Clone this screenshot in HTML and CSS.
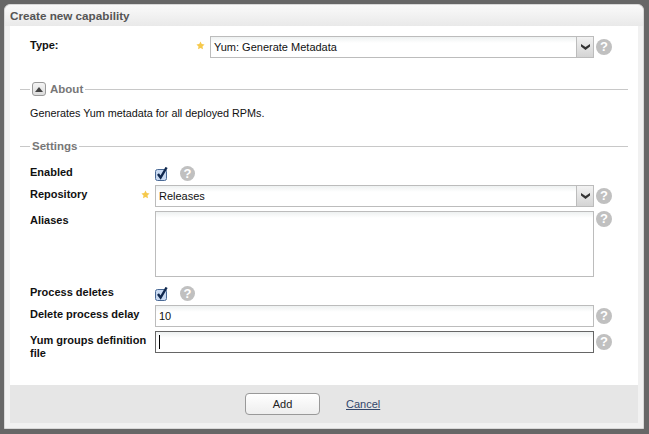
FILE: index.html
```html
<!DOCTYPE html>
<html lang="en">
<head>
    <meta charset="UTF-8">
    <meta name="viewport" content="width=device-width, initial-scale=1.0">
    <title>Create new capability</title>
    <link rel="stylesheet" href="styles.css">
</head>
<body>
    <svg class="defs" width="0" height="0">
        <symbol id="star" viewBox="0 0 10 10">
            <path d="M5 .5l1.400 2.900 3.100.4-2.300 2.200.6 3.200L5 7.700 2.200 9.200l.6-3.200L.5 3.800l3.100-.4z" fill="#f6c94c"/>
        </symbol>
        <symbol id="check" viewBox="0 0 13 14">
            <rect x=".5" y="2.500" width="11" height="11" rx="2" fill="#c9daf2" stroke="#4a6a96"/>
            <path d="M3 7l2.600 3.600L11.600 .5" fill="none" stroke="#10284e" stroke-width="2.400"/>
        </symbol>
    </svg>

    <div id="dialog">
        <div id="titleBar">Create new capability</div>

        <div id="content">
            <div class="typeRow">
                <label class="fieldLabel">Type:</label>
                <svg class="star"><use href="#star"/></svg>
                <div class="selectBox">
                    <span class="selectValue">Yum: Generate Metadata</span>
                    <span class="selectArrow"><svg width="9" height="6" viewBox="0 0 9 6"><path d="M0 0l4.500 3L9 0v2.500L4.500 6 0 2.500z" fill="#333"/></svg></span>
                </div>
                <span class="help">?</span>
            </div>

            <div class="section aboutSection">
                <span class="collapse"><svg width="8" height="5" viewBox="0 0 8 5"><path d="M4 0l4 5H0z" fill="#444"/></svg></span>
                <span class="sectionTitle">About</span>
            </div>
            <p class="about">Generates Yum metadata for all deployed RPMs.</p>

            <div class="section settingsSection">
                <span class="sectionTitle">Settings</span>
            </div>

            <div class="formGrid">
                <label class="fieldLabel span2 checkLabel">Enabled</label>
                <div class="checkCell">
                    <svg class="check"><use href="#check"/></svg>
                    <span class="help">?</span>
                </div>
                <span></span>

                <label class="fieldLabel">Repository</label>
                <svg class="star"><use href="#star"/></svg>
                <div class="selectBox">
                    <span class="selectValue">Releases</span>
                    <span class="selectArrow"><svg width="9" height="6" viewBox="0 0 9 6"><path d="M0 0l4.500 3L9 0v2.500L4.500 6 0 2.500z" fill="#333"/></svg></span>
                </div>
                <span class="help">?</span>

                <label class="fieldLabel span2">Aliases</label>
                <textarea class="textField aliases"></textarea>
                <span class="help helpTop">?</span>

                <label class="fieldLabel span2 checkLabel">Process deletes</label>
                <div class="checkCell">
                    <svg class="check"><use href="#check"/></svg>
                    <span class="help">?</span>
                </div>
                <span></span>

                <label class="fieldLabel span2">Delete process delay</label>
                <input class="textField" type="text" value="10">
                <span class="help">?</span>

                <label class="fieldLabel span2">Yum groups definition file</label>
                <input class="textField focused" type="text">
                <span class="help">?</span>
            </div>
        </div>

        <div id="footer">
            <button class="addButton">Add</button>
            <a class="cancelLink" href="#">Cancel</a>
        </div>
    </div>
</body>
</html>
```

FILE: styles.css
```css
html, body {
    margin: 0;
    height: 100%;
}
body {
    background-color: #676767;
    padding: 4px 5px 5px 4px;
    box-sizing: border-box;
    font-family: "Liberation Sans", Arial, sans-serif;
    font-size: 11px;
    color: #111;
}
.defs {
    display: block;
}
#dialog {
    height: 100%;
    box-sizing: border-box;
    border: 1px solid #d8d8d8;
    border-radius: 6px 6px 0 0;
    background-color: #f1f1f1;
    padding: 0 5px 5px 5px;
    display: flex;
    flex-direction: column;
}
#titleBar {
    height: 21px;
    line-height: 22px;
    margin: 0 -5px;
    padding-left: 5px;
    background: linear-gradient(#fafafa, #e9e9e9);
    border-radius: 6px 6px 0 0;
    font-size: 11.7px;
    font-weight: bold;
    color: #555;
}
#content {
    flex: 1;
    background-color: #fff;
    padding: 10px 10px 0 10px;
}

.typeRow {
    display: grid;
    grid-template-columns: 166px 14px 384px 18px;
    align-items: start;
    margin-left: 10px;
}
.formGrid {
    display: grid;
    grid-template-columns: 111px 14px 439px 18px;
    row-gap: 4px;
    align-items: start;
    margin: 14px 0 0 10px;
}
.span2 {
    grid-column: span 2;
}
.fieldLabel {
    font-weight: bold;
    line-height: 13px;
    padding-top: 3px;
}
.checkLabel {
    padding-top: 0;
    margin-top: -1px;
}
.star {
    width: 9px;
    height: 9px;
    margin-top: 5px;
}

.selectBox {
    display: flex;
    height: 22px;
    box-sizing: border-box;
    border: 1px solid #bcbcbc;
    background: linear-gradient(#eef1f1, #fff 6px);
}
.selectValue {
    flex: 1;
    line-height: 20px;
    padding-left: 3px;
}
.selectArrow {
    width: 16px;
    border-left: 1px solid #bcbcbc;
    background: linear-gradient(#f2f2f2, #d4d4d4);
    display: flex;
    align-items: center;
    justify-content: center;
}
.textField {
    display: block;
    width: 100%;
    height: 22px;
    box-sizing: border-box;
    margin: 0;
    padding: 0 3px;
    border: 1px solid #bcbcbc;
    border-radius: 0;
    background: linear-gradient(#eef1f1, #fff 6px);
    font-family: inherit;
    font-size: 11px;
    color: #111;
    outline: none;
    resize: none;
}
.aliases {
    height: 66px;
    margin-bottom: 6px;
}
.focused {
    border-color: #666;
    background: linear-gradient(#000, #000) 3px 3px / 1px 14px no-repeat, linear-gradient(#eef1f1, #fff 6px);
}

.help {
    width: 16px;
    height: 16px;
    margin: 3px 0 0 2px;
    border-radius: 50%;
    background-color: #c0c0c0;
    color: #fff;
    font-size: 13px;
    font-weight: bold;
    line-height: 16px;
    text-align: center;
}
.helpTop {
    margin-top: 0;
}
.checkCell {
    display: flex;
    align-items: flex-start;
    height: 14px;
}
.check {
    width: 13px;
    height: 14px;
}
.checkCell .help {
    width: 15px;
    height: 15px;
    line-height: 15px;
    margin: -1px 0 0 12px;
}

.section {
    display: flex;
    align-items: center;
    height: 14px;
    gap: 2px;
}
.section::before {
    content: "";
    width: 10px;
    border-top: 1px solid #c8c8c8;
}
.section::after {
    content: "";
    flex: 1;
    border-top: 1px solid #c8c8c8;
}
.aboutSection {
    margin-top: 24px;
}
.settingsSection {
    margin-top: 19px;
}
.sectionTitle {
    font-weight: bold;
    font-size: 11.500px;
    color: #777;
}
.collapse {
    width: 14px;
    height: 14px;
    box-sizing: border-box;
    border: 1px solid #999;
    border-radius: 3px;
    margin-right: 2px;
    background: linear-gradient(#f4f4f4, #dcdcdc);
    display: flex;
    align-items: center;
    justify-content: center;
}
.about {
    margin: 11px 0 0 10px;
    font-size: 10.800px;
    line-height: 13px;
}

#footer {
    height: 38px;
    background-color: #e6e6e6;
    display: flex;
    align-items: flex-start;
}
.addButton {
    width: 75px;
    height: 22px;
    margin: 8px 0 0 235px;
    padding: 0;
    border: 1px solid #999;
    border-radius: 4px;
    background: linear-gradient(#fff, #eee);
    font-family: inherit;
    font-size: 11px;
    color: #222;
}
.cancelLink {
    margin: 13px 0 0 26px;
    font-size: 11px;
    color: #33476b;
}
```
